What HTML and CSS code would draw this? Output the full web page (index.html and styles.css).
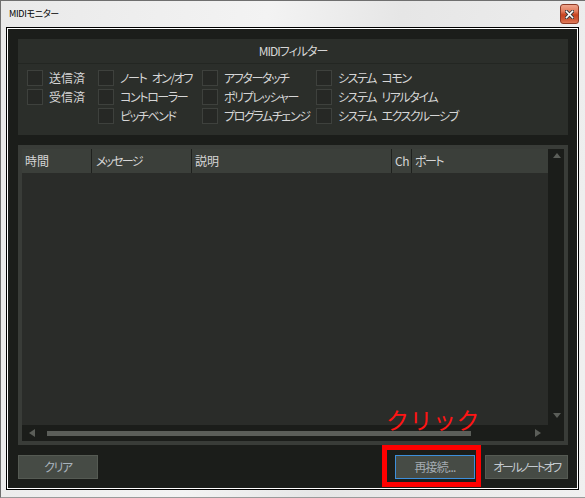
FILE: index.html
```html
<!DOCTYPE html>
<html lang="ja">
<head>
<meta charset="utf-8">
<title>MIDIモニター</title>
<link rel="stylesheet" href="styles.css">
</head>
<body>
<div class="window">
  <div class="titlebar">
    <span class="title">MIDIモニター</span>
    <span class="close">
      <svg width="9" height="9" viewBox="0 0 9 9">
        <path d="M1.5 1.5 L7.5 7.5 M7.5 1.5 L1.5 7.5" stroke="#3b3b3b" stroke-width="3.4" stroke-linecap="square"/>
        <path d="M1.5 1.5 L7.5 7.5 M7.5 1.5 L1.5 7.5" stroke="#ffffff" stroke-width="1.6" stroke-linecap="square"/>
      </svg>
    </span>
  </div>
  <div class="frame">
    <div class="client">
      <section class="filter">
        <div class="filter-head">MIDIフィルター</div>
        <div class="filter-grid">
          <label class="chk kanji"><span class="box"></span>送信済</label>
          <label class="chk"><span class="box"></span>ノート オン/オフ</label>
          <label class="chk"><span class="box"></span>アフタータッチ</label>
          <label class="chk"><span class="box"></span>システム コモン</label>
          <label class="chk kanji"><span class="box"></span>受信済</label>
          <label class="chk"><span class="box"></span>コントローラー</label>
          <label class="chk"><span class="box"></span>ポリプレッシャー</label>
          <label class="chk"><span class="box"></span>システム リアルタイム</label>
          <span class="chk-empty"></span>
          <label class="chk"><span class="box"></span>ピッチベンド</label>
          <label class="chk"><span class="box"></span>プログラムチェンジ</label>
          <label class="chk"><span class="box"></span>システム エクスクルーシブ</label>
        </div>
      </section>
      <div class="list">
        <div class="list-head">
          <div class="col c-time">時間</div>
          <div class="col c-msg">メッセージ</div>
          <div class="col c-desc">説明</div>
          <div class="col c-ch">Ch</div>
          <div class="col c-port">ポート</div>
        </div>
        <div class="list-body"></div>
        <div class="hscroll">
          <span class="arr arr-left"></span>
          <span class="hthumb"></span>
          <span class="arr arr-right"></span>
        </div>
        <div class="vscroll">
          <span class="arr arr-up"></span>
          <span class="arr arr-down"></span>
        </div>
        <div class="corner"></div>
      </div>
      <div class="buttons">
        <button class="btn btn-clear">クリア</button>
        <div class="spacer"></div>
        <button class="btn btn-reconnect">再接続...</button>
        <button class="btn btn-notesoff">オールノートオフ</button>
      </div>
    </div>
  </div>
  <div class="highlight"></div>
  <div class="click-note">クリック</div>
</div>
</body>
</html>
```

FILE: styles.css
```css
* { box-sizing: border-box; }

html, body {
  margin: 0;
  padding: 0;
  background: #ececec;
}

body {
  font-family: "Noto Sans CJK JP", "Noto Sans", sans-serif;
  font-feature-settings: "palt";
}

.window {
  position: relative;
  width: 585px;
  height: 498px;
  border-top: 1px solid #6f6f6f;
  border-left: 1px solid #6f6f6f;
  border-bottom: 1px solid #9a9a9a;
  padding: 0 6px 7px 5px;
  background: linear-gradient(100deg, #e9e9e9 0%, #f3f3f3 40%, #e6e6e6 60%, #f0f0f0 100%);
  display: flex;
  flex-direction: column;
}

.titlebar {
  height: 26px;
  display: flex;
  align-items: flex-start;
  justify-content: space-between;
}

.title {
  margin: 7px 0 0 3px;
  font-size: 9px;
  line-height: 11px;
  color: #000;
  letter-spacing: -0.3px;
}

.close {
  margin-top: 3px;
  width: 19px;
  height: 20px;
  border: 1px solid #8e3b26;
  border-radius: 3px;
  background: linear-gradient(#efa58c 0%, #e27d5e 35%, #c8431f 55%, #cf5a38 80%, #df7b5a 100%);
  display: flex;
  align-items: center;
  justify-content: center;
}

.frame {
  flex: 1;
  border: 1px solid #000;
}

.client {
  height: 100%;
  border: 1px solid #fff;
  background: #1b1d1a;
  padding: 10px 9px 9px 10px;
  display: flex;
  flex-direction: column;
  gap: 10px;
}

/* filter panel */
.filter {
  height: 96px;
  background: #2b2e2a;
  color: #d6d6d6;
  font-size: 12px;
}

.filter-head {
  height: 25px;
  border-bottom: 1px solid #232622;
  display: flex;
  align-items: center;
  justify-content: center;
  line-height: 16px;
  letter-spacing: -1px;
}

.filter-grid {
  display: grid;
  grid-template-columns: 71px 104px 114px auto;
  grid-auto-rows: 16px;
  row-gap: 3px;
  padding: 6px 0 0 9px;
}

.chk {
  display: flex;
  align-items: center;
  white-space: pre;
  line-height: 16px;
  letter-spacing: -1.4px;
  word-spacing: 4px;
}

.chk.kanji { letter-spacing: 0; }

.box {
  width: 16px;
  height: 16px;
  flex: none;
  margin-right: 6px;
  border: 1px solid #3e413d;
  background: #262825;
}

/* list */
.list {
  height: 300px;
  border: 4px solid #393c38;
  display: grid;
  grid-template-columns: 1fr 16px;
  grid-template-rows: 24px 1fr 16px;
  background: #2a2c29;
}

.list-head {
  grid-column: 1;
  grid-row: 1;
  display: flex;
  background: #3b3f3a;
  color: #d6d6d6;
  font-size: 12px;
}

.col {
  height: 24px;
  display: flex;
  align-items: center;
  padding-left: 3px;
  border-right: 1px solid #1e201d;
  white-space: nowrap;
  line-height: 16px;
}

.c-time { width: 70px; }
.c-msg { width: 100px; padding-left: 4px; letter-spacing: -1.8px; }
.c-desc { width: 200px; }
.c-ch { width: 20px; letter-spacing: -0.5px; }
.c-port { flex: 1; border-right: none; letter-spacing: -1.5px; }

.list-body {
  grid-column: 1;
  grid-row: 2;
  background: #2a2c29;
}

.hscroll {
  grid-column: 1;
  grid-row: 3;
  background: #1b1d1a;
  display: flex;
  align-items: center;
  padding-left: 7px;
}

.hthumb {
  width: 424px;
  height: 5px;
  margin-left: 12px;
  background: #5b5e59;
}

.vscroll {
  grid-column: 2;
  grid-row: 1 / 3;
  background: #1b1d1a;
  display: flex;
  flex-direction: column;
  align-items: center;
  justify-content: space-between;
  padding: 4px 0 7px 1px;
}

.corner {
  grid-column: 2;
  grid-row: 3;
  background: #1b1d1a;
}

.arr {
  width: 0;
  height: 0;
  display: block;
}

.arr-left {
  border-top: 4px solid transparent;
  border-bottom: 4px solid transparent;
  border-right: 6px solid #5b5e59;
}

.arr-right {
  margin-left: 64px;
  border-top: 4px solid transparent;
  border-bottom: 4px solid transparent;
  border-left: 6px solid #5b5e59;
}

.arr-up {
  border-left: 4px solid transparent;
  border-right: 4px solid transparent;
  border-bottom: 5px solid #5b5e59;
}

.arr-down {
  border-left: 4px solid transparent;
  border-right: 4px solid transparent;
  border-top: 5px solid #5b5e59;
}

/* buttons */
.buttons {
  height: 24px;
  display: flex;
  gap: 10px;
}

.spacer { flex: 1; }

.btn {
  height: 24px;
  margin: 0;
  padding: 0;
  border: 1px solid #555a53;
  background: #464b45;
  font-family: "Noto Sans CJK JP", "Noto Sans", sans-serif;
  font-feature-settings: "palt";
  font-size: 12px;
  line-height: 16px;
  color: #a9b3bd;
  display: flex;
  align-items: center;
  justify-content: center;
  white-space: nowrap;
}

.btn-clear { width: 80px; letter-spacing: -1.3px; }
.btn-reconnect { width: 80px; border-color: #3d8fdc; color: #a4abb2; letter-spacing: -0.8px; }
.btn-notesoff { width: 83px; color: #c4cad0; letter-spacing: -2.4px; }

/* annotations */
.highlight {
  position: absolute;
  left: 381px;
  top: 444px;
  width: 99px;
  height: 42px;
  border: 5px solid #ff0000;
}

.click-note {
  position: absolute;
  left: 385px;
  top: 404px;
  font-size: 23px;
  line-height: 28px;
  color: #ff1414;
  letter-spacing: 0.5px;
  font-feature-settings: normal;
}
```
